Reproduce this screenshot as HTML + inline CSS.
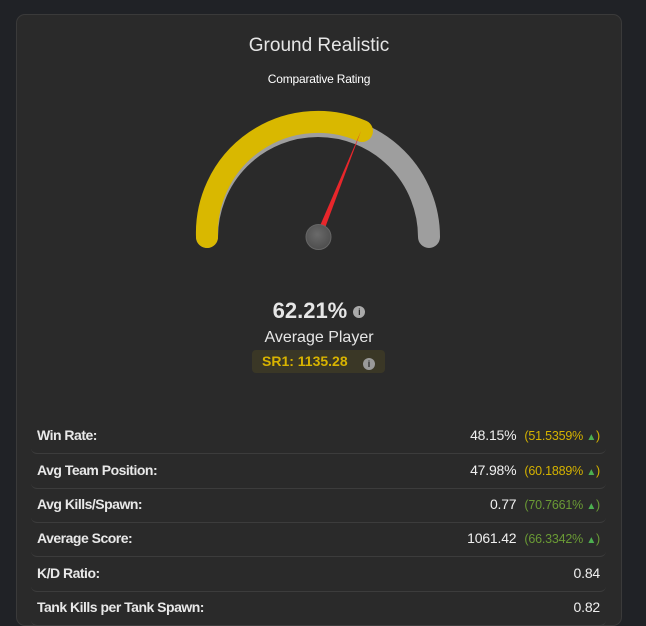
<!DOCTYPE html>
<html><head><meta charset="utf-8"><style>
html,body{margin:0;padding:0;background:#202226;width:646px;height:613px;overflow:hidden;font-family:"Liberation Sans",sans-serif;}
.card{position:absolute;left:16px;top:14px;width:604px;height:610px;background:#2a2a2a;border:1px solid #3a3a3a;border-radius:9px;}
.t{position:absolute;left:0;width:638px;text-align:center;color:#e6e6e6;}
.row{position:absolute;left:31px;width:575px;height:34px;border-bottom:1px solid #3c3c3c;border-radius:0 0 6px 6px;}
.lab{position:absolute;left:6px;top:8px;color:#e8e8e8;font-weight:bold;font-size:14px;letter-spacing:-0.5px;}
.val{position:absolute;right:6px;top:8px;color:#f0f0f0;font-size:14px;letter-spacing:-0.2px;white-space:nowrap;}
.pc{font-size:12.5px;margin-left:8px;}
.y{color:#d4b200}.g{color:#6a9a35}.ar{color:#4caf50;font-size:10px}
.info{display:inline-block;width:12px;height:12px;border-radius:50%;background:#aaa;color:#2a2a2a;font-size:9px;font-weight:bold;line-height:12px;text-align:center;vertical-align:middle;}
</style></head><body>
<div class="card"></div>
<div class="t" style="top:35px;font-size:19px;">Ground Realistic</div>
<div class="t" style="top:72px;font-size:12px;color:#fff;letter-spacing:-0.2px">Comparative Rating</div>
<svg style="position:absolute;left:0;top:0" width="646" height="300">
<defs><radialGradient id="k" cx="0.45" cy="0.4" r="0.6"><stop offset="0" stop-color="#6a6a6a"/><stop offset="1" stop-color="#4e4e4e"/></radialGradient></defs>
<path d="M207 237 A111 111 0 0 1 429 237" fill="none" stroke="#9e9e9e" stroke-width="22" stroke-linecap="round"/>
<path d="M207 237 A111 111 0 0 1 362 131" fill="none" stroke="#d9b800" stroke-width="22" stroke-linecap="round"/>
<polygon points="315.6,236 321.2,238.2 361,131" fill="#e8262b"/>
<circle cx="318.5" cy="237" r="12.5" fill="url(#k)" stroke="#666" stroke-width="1"/>
</svg>
<div class="t" style="top:298px;font-size:22px;font-weight:bold;">62.21% <span class="info">i</span></div>
<div class="t" style="top:329px;font-size:16px;">Average Player</div>
<div style="position:absolute;left:252px;top:350px;width:133px;height:23px;background:#3a3726;border-radius:4px;"></div>
<div style="position:absolute;left:262px;top:353px;font-size:14px;font-weight:bold;color:#d8b300;">SR1: 1135.28</div>
<span class="info" style="position:absolute;left:363px;top:358px;background:#999">i</span>
<div class="row" style="top:419px"><span class="lab">Win Rate:</span><span class="val">48.15%<span class="pc y">(51.5359% <span class="ar">▲</span>)</span></span></div>
<div class="row" style="top:454px"><span class="lab">Avg Team Position:</span><span class="val">47.98%<span class="pc y">(60.1889% <span class="ar">▲</span>)</span></span></div>
<div class="row" style="top:488px"><span class="lab">Avg Kills/Spawn:</span><span class="val">0.77<span class="pc g">(70.7661% <span class="ar">▲</span>)</span></span></div>
<div class="row" style="top:522px"><span class="lab">Average Score:</span><span class="val">1061.42<span class="pc g">(66.3342% <span class="ar">▲</span>)</span></span></div>
<div class="row" style="top:557px"><span class="lab">K/D Ratio:</span><span class="val">0.84</span></div>
<div class="row" style="top:591px"><span class="lab">Tank Kills per Tank Spawn:</span><span class="val">0.82</span></div>
</body></html>
